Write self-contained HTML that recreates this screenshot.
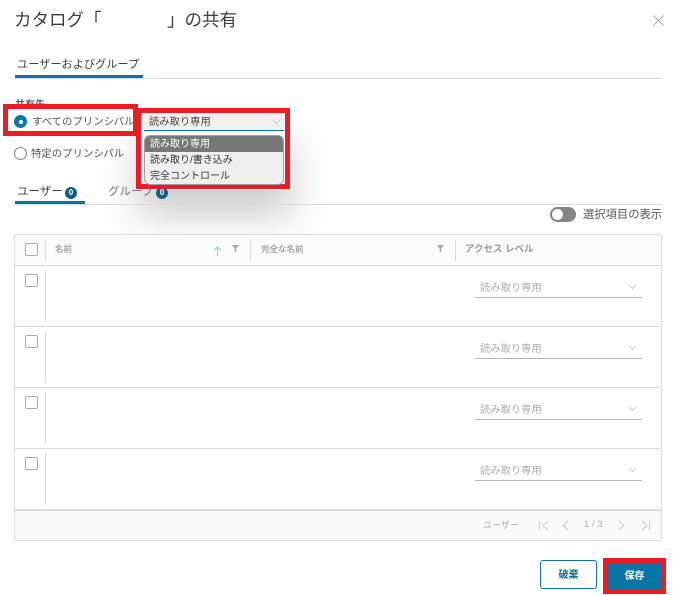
<!DOCTYPE html>
<html lang="ja"><head><meta charset="utf-8">
<style>
html,body{margin:0;padding:0;background:#fff;width:677px;height:595px;overflow:hidden}
body{position:relative;font-family:"Liberation Sans","Noto Sans CJK JP",sans-serif;color:#444}
.a{position:absolute;white-space:nowrap}
.l{position:absolute;background:#d9d9d9}
.cb{position:absolute;left:25px;width:11px;height:11px;border:1px solid #a3acb3;border-radius:2px;background:#fff}
.sel{position:absolute;left:475px;width:167px;height:21px;border-bottom:1px solid #b5b9bc;font-size:10.3px;color:#adadad;line-height:19px}
.sel span{position:absolute;left:5px;top:3px}
.sel svg{position:absolute;right:5px;top:8px}
</style></head><body>

<div class="a" style="left:14px;top:8px;font-size:17.5px;line-height:24px;color:#3d3d3d">カタログ「</div>
<div class="a" style="left:167px;top:8px;font-size:17.5px;line-height:24px;color:#3d3d3d">」の共有</div>
<svg class="a" style="left:653px;top:15px" width="11" height="11" viewBox="0 0 11 11"><path d="M.5.5l10 10M10.500.5l-10 10" stroke="#8f8f8f" stroke-width=".8" fill="none"/></svg>

<div class="a" style="left:17px;top:57px;font-size:11.2px;line-height:16px;color:#3f3f3f">ユーザーおよびグループ</div>
<div class="l" style="left:15px;top:78px;width:647px;height:1px"></div>
<div class="a" style="left:15px;top:75px;width:128px;height:3px;background:#0a76a8"></div>

<div class="a" style="left:15px;top:99px;font-size:10px;line-height:14px;font-weight:bold;color:#555">共有先</div>

<!-- shadow -->
<div class="a" style="left:150px;top:140px;width:130px;height:50px;box-shadow:0 14px 40px 12px rgba(0,0,0,.2)"></div>

<!-- tabs 2 -->
<div class="a" style="left:17px;top:184px;font-size:11.5px;line-height:16px;color:#3f3f3f">ユーザー</div>
<div class="a" style="left:65px;top:187px;width:12px;height:12px;border-radius:50%;background:#0f5f86;color:#fff;font-size:8px;line-height:12px;text-align:center;font-weight:bold">0</div>
<div class="a" style="left:108px;top:184px;font-size:11.5px;line-height:16px;color:#777">グループ</div>
<div class="a" style="left:156px;top:187px;width:12px;height:12px;border-radius:50%;background:#0f5f86;color:#fff;font-size:8px;line-height:12px;text-align:center;font-weight:bold">0</div>
<div class="l" style="left:15px;top:204px;width:647px;height:1px"></div>
<div class="a" style="left:15px;top:201px;width:70px;height:3px;background:#0a76a8"></div>

<!-- radios -->
<div class="a" style="left:3px;top:104px;width:125px;height:22px;border:5px solid #ed1c24;background:#fff"></div>
<div class="a" style="left:14px;top:115px;width:13px;height:13px;border-radius:50%;background:#0a76a8"></div>
<div class="a" style="left:18.500px;top:119.500px;width:4px;height:4px;border-radius:50%;background:#fff"></div>
<div class="a" style="left:32px;top:116px;width:101px;overflow:hidden;font-size:10.4px;line-height:14px;color:#555">すべてのプリンシパル</div>
<div class="a" style="left:14px;top:147px;width:11px;height:11px;border-radius:50%;border:1px solid #7b858c;background:#fff"></div>
<div class="a" style="left:31px;top:148px;font-size:10.4px;line-height:14px;color:#555">特定のプリンシパル</div>

<!-- dropdown -->
<div class="a" style="left:136px;top:108px;width:144px;height:71px;border:5px solid #ed1c24;background:#fff"></div>
<div class="a" style="left:144px;top:113px;width:140px;height:17px;background:#f1f1f1;border-bottom:1px solid #0a76a8"></div>
<div class="a" style="left:149px;top:116px;font-size:10.3px;line-height:14px;color:#444">読み取り専用</div>
<svg class="a" style="left:272px;top:119px" width="9" height="6" viewBox="0 0 9 6"><path d="M1 1l3.500 3.500L8 1" stroke="#c4c4c4" fill="none" stroke-width=".8"/></svg>
<div class="a" style="left:144px;top:135px;width:138px;height:48px;border:1px solid #a0a0a0;border-radius:6px;background:#efefef;overflow:hidden;font-size:10px;line-height:18px;color:#333;box-sizing:content-box">
<div style="background:#777;color:#fff;padding-left:5px;height:16px">読み取り専用</div>
<div style="padding-left:5px;height:16px">読み取り/書き込み</div>
<div style="padding-left:5px;height:16px">完全コントロール</div>
</div>

<!-- toggle -->
<div class="a" style="left:550px;top:207px;width:26px;height:15px;border-radius:8px;background:#858585"></div>
<div class="a" style="left:552px;top:209px;width:11px;height:11px;border-radius:50%;background:#fff"></div>
<div class="a" style="left:583px;top:208px;font-size:11.300px;line-height:14px;color:#555">選択項目の表示</div>

<!-- table -->
<div class="a" style="left:14px;top:234px;width:646px;height:305px;border:1px solid #dcdcdc;border-radius:2px"></div>
<div class="a" style="left:15px;top:235px;width:646px;height:30px;background:#fbfbfb"></div>
<div class="l" style="left:15px;top:265px;width:646px;height:1px"></div>
<div class="l" style="left:45px;top:240px;width:1px;height:21px"></div>
<div class="l" style="left:250px;top:240px;width:1px;height:21px"></div>
<div class="l" style="left:455px;top:240px;width:1px;height:21px"></div>
<div class="cb" style="top:243px"></div>
<div class="a" style="left:55px;top:243px;font-size:8.5px;line-height:13px;font-weight:bold;color:#a8a8a8">名前</div>
<svg class="a" style="left:213px;top:246px" width="9" height="10" viewBox="0 0 9 10"><path d="M4.500 9.500V1M1 4.500L4.500 1 8 4.500" stroke="#7fb4ce" fill="none" stroke-width=".8"/></svg>
<svg class="a" style="left:232px;top:245px" width="7" height="7" viewBox="0 0 7 7"><path d="M0 0h7L4.300 3.500V7H2.700V3.500z" fill="#a8a8a8"/></svg>
<div class="a" style="left:261px;top:243px;font-size:8.5px;line-height:13px;font-weight:bold;color:#a8a8a8">完全な名前</div>
<svg class="a" style="left:437px;top:245px" width="7" height="7" viewBox="0 0 7 7"><path d="M0 0h7L4.300 3.500V7H2.700V3.500z" fill="#a8a8a8"/></svg>
<div class="a" style="left:465px;top:243px;font-size:9.5px;line-height:14px;font-weight:bold;color:#9a9a9a">アクセス レベル</div>

<!-- rows -->
<div class="cb" style="top:274px"></div><div class="l" style="left:45px;top:270px;width:1px;height:52px"></div>
<div class="l" style="left:15px;top:326px;width:646px;height:1px"></div>
<div class="sel" style="top:276px"><span>読み取り専用</span><svg width="9" height="6" viewBox="0 0 9 6"><path d="M1 1l3.500 3.500L8 1" stroke="#c4c4c4" fill="none" stroke-width=".8"/></svg></div>

<div class="cb" style="top:335px"></div><div class="l" style="left:45px;top:331px;width:1px;height:52px"></div>
<div class="l" style="left:15px;top:387px;width:646px;height:1px"></div>
<div class="sel" style="top:337px"><span>読み取り専用</span><svg width="9" height="6" viewBox="0 0 9 6"><path d="M1 1l3.500 3.500L8 1" stroke="#c4c4c4" fill="none" stroke-width=".8"/></svg></div>

<div class="cb" style="top:396px"></div><div class="l" style="left:45px;top:392px;width:1px;height:52px"></div>
<div class="l" style="left:15px;top:448px;width:646px;height:1px"></div>
<div class="sel" style="top:398px"><span>読み取り専用</span><svg width="9" height="6" viewBox="0 0 9 6"><path d="M1 1l3.500 3.500L8 1" stroke="#c4c4c4" fill="none" stroke-width=".8"/></svg></div>

<div class="cb" style="top:457px"></div><div class="l" style="left:45px;top:453px;width:1px;height:52px"></div>
<div class="sel" style="top:459px"><span>読み取り専用</span><svg width="9" height="6" viewBox="0 0 9 6"><path d="M1 1l3.500 3.500L8 1" stroke="#c4c4c4" fill="none" stroke-width=".8"/></svg></div>

<!-- pager -->
<div class="a" style="left:15px;top:509px;width:646px;height:2px;background:#dcdcdc"></div>
<div class="a" style="left:15px;top:511px;width:646px;height:29px;background:#fafafa"></div>
<div class="a" style="left:483px;top:519px;font-size:9px;line-height:13px;color:#aaa">ユーザー</div>
<svg class="a" style="left:538px;top:519px" width="114" height="13" viewBox="0 0 114 13" fill="none" stroke="#c8c8c8" stroke-width="1"><path d="M1.500 2v9M10 2L5 6.500 10 11M30 2l-5 4.500 5 4.500M81 2l5 4.500-5 4.500M104 2l5 4.500-5 4.500M111.500 2v9"/></svg>
<div class="a" style="left:584px;top:518px;font-size:9.500px;line-height:13px;color:#aaa">1 / 3</div>

<!-- buttons -->
<div class="a" style="left:540px;top:560px;width:55px;height:27px;border:1px solid #0a76a8;border-radius:3px;background:#fff;color:#0a6d9c;font-size:10px;font-weight:bold;line-height:29px;text-align:center">破棄</div>
<div class="a" style="left:603px;top:558px;width:53px;height:26px;border:5px solid #ed1c24;background:#0a76a8;color:#fff;font-size:10px;font-weight:bold;line-height:28px;text-align:center">保存</div>

</body></html>
